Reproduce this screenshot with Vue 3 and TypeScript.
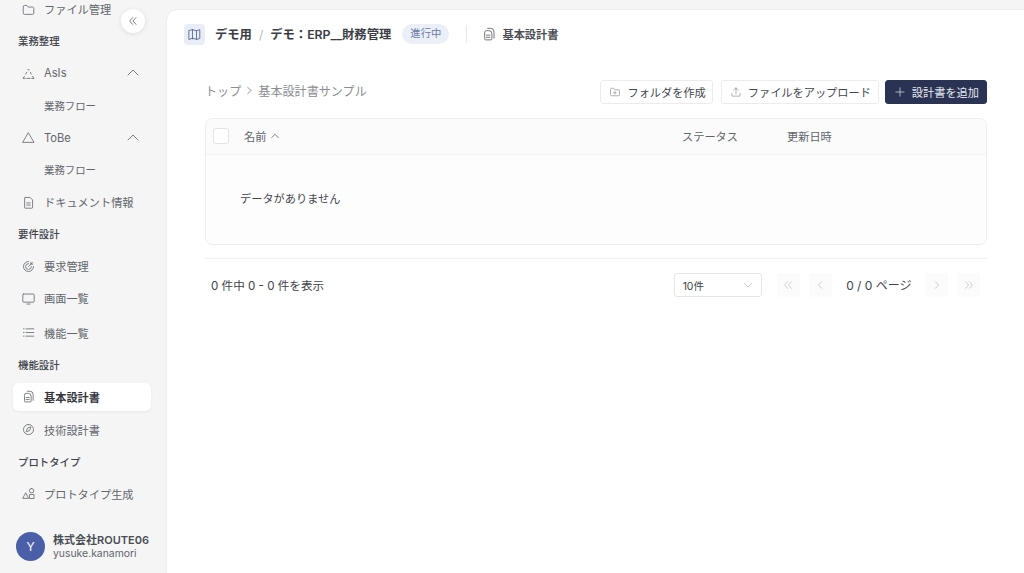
<script setup lang="ts">
type NavItem = {
  kind: 'head' | 'item' | 'sub'
  label: string
  icon?: string
  active?: boolean
  chevron?: boolean
  spaced?: boolean
}

const nav: NavItem[] = [
  { kind: 'item', label: 'ファイル管理', icon: 'folder' },
  { kind: 'head', label: '業務整理' },
  { kind: 'item', label: 'AsIs', icon: 'dashed', chevron: true },
  { kind: 'sub', label: '業務フロー' },
  { kind: 'item', label: 'ToBe', icon: 'triangle', chevron: true },
  { kind: 'sub', label: '業務フロー' },
  { kind: 'item', label: 'ドキュメント情報', icon: 'doc' },
  { kind: 'head', label: '要件設計' },
  { kind: 'item', label: '要求管理', icon: 'target' },
  { kind: 'item', label: '画面一覧', icon: 'monitor' },
  { kind: 'item', label: '機能一覧', icon: 'list', spaced: true },
  { kind: 'head', label: '機能設計' },
  { kind: 'item', label: '基本設計書', icon: 'files', active: true },
  { kind: 'item', label: '技術設計書', icon: 'compass' },
  { kind: 'head', label: 'プロトタイプ' },
  { kind: 'item', label: 'プロトタイプ生成', icon: 'shapes' },
]

const icons: Record<string, string> = {
  folder: 'M1.500 4.500A1.500 1.500 0 0 1 3 3h3l1.600 2H13a1.500 1.500 0 0 1 1.500 1.500v6A1.500 1.500 0 0 1 13 14H3a1.500 1.500 0 0 1-1.500-1.500z',
  dashed: 'M7.300 3.700 8 2.500l.7 1.200M10.200 6.500l1.300 2.300M13 11.500l1.800 2.500H12M10 14H6M4 14H1.200L3 11.500M5.800 6.500 4.500 8.800',
  triangle: 'M8 2.500 14.800 14H1.200z',
  doc: 'M4 1.800h6l3 3v9.400a.8.8 0 0 1-.8.8H4a.8.8 0 0 1-.8-.8V2.600A.8.8 0 0 1 4 1.800zM5.800 8.500h4.400M5.800 11.200h4.400',
  target: 'M8 1.800A6.200 6.200 0 1 0 14.200 8M8 4.400A3.600 3.600 0 1 0 11.600 8M8 8l4.800-4.800M10.900 2.800v2.300h2.300',
  monitor: 'M2 2.500h12a1 1 0 0 1 1 1v8a1 1 0 0 1-1 1H2a1 1 0 0 1-1-1v-8a1 1 0 0 1 1-1zM6 14.800h4',
  list: 'M5 3.500h9.500M5 8h9.500M5 12.500h9.500M1.800 3.500h.8M1.800 8h.8M1.800 12.500h.8',
  files: 'M6.500 1.500h3.200a4 4 0 0 1 4 4v7.200M3 6.200a2 2 0 0 1 2-2h2.800a3.500 3.500 0 0 1 3.500 3.500v5.800a1.200 1.200 0 0 1-1.200 1.200H4.200A1.200 1.200 0 0 1 3 13.300zM5 9.300h4M5 11.800h4',
  compass: 'M8 1.800a6.200 6.200 0 1 0 0 12.400A6.200 6.200 0 0 0 8 1.800zM10.800 5.200 9.400 9.400 5.200 10.800 6.600 6.600z',
  shapes: 'M4.800 7.500 8.200 14H1.400zM11.800 1.800a2.700 2.700 0 1 1 0 5.400 2.700 2.700 0 0 1 0-5.400zM9.800 9.200h5v5h-5z',
}
</script>

<template>
  <div class="page">
    <aside class="sidebar">
      <nav class="nav">
        <template v-for="(n, i) in nav" :key="i">
          <div v-if="n.kind === 'head'" class="nav-head">{{ n.label }}</div>
          <div v-else-if="n.kind === 'sub'" class="nav-sub">{{ n.label }}</div>
          <div v-else class="nav-item" :class="{ active: n.active, spaced: n.spaced }">
            <svg class="nav-icon" viewBox="0 0 16 16"><path :d="icons[n.icon!]" /></svg>
            <span>{{ n.label }}</span>
            <svg v-if="n.chevron" class="nav-chevron" viewBox="0 0 12 12"><path d="M1 8l5-5 5 5" /></svg>
          </div>
        </template>
      </nav>
      <div class="account">
        <div class="avatar">Y</div>
        <div class="account-text">
          <div class="company">株式会社ROUTE06</div>
          <div class="user">yusuke.kanamori</div>
        </div>
      </div>
      <button class="collapse">
        <svg viewBox="0 0 12 12"><path d="M5.500 2 2 6l3.500 4M9.500 2 6 6l3.500 4" /></svg>
      </button>
    </aside>

    <main class="panel">
      <header class="topbar">
        <span class="map-box">
          <svg viewBox="0 0 16 16"><path d="M1.500 3 5.500 2l5 1.500 4-1.500v11l-4 1-5-1.500-4 1.500zM5.500 2v11.500M10.500 3.500V14" /></svg>
        </span>
        <span class="crumb">デモ用</span>
        <span class="slash">/</span>
        <span class="crumb">デモ：ERP__財務管理</span>
        <span class="badge">進行中</span>
        <span class="divider"></span>
        <svg class="page-icon" viewBox="0 0 16 16"><path d="M6.500 1.500h3.200a4 4 0 0 1 4 4v7.200M3 6.200a2 2 0 0 1 2-2h2.800a3.500 3.500 0 0 1 3.500 3.500v5.800a1.200 1.200 0 0 1-1.200 1.200H4.200A1.200 1.200 0 0 1 3 13.300zM5 9.300h4M5 11.800h4" /></svg>
        <span class="page-name">基本設計書</span>
      </header>

      <section class="content">
        <div class="toolbar">
          <div class="path">
            <span>トップ</span>
            <svg viewBox="0 0 8 10"><path d="M2 1.500 6 5 2 8.500" /></svg>
            <span>基本設計書サンプル</span>
          </div>
          <div class="actions">
            <button class="btn folder-btn">
              <svg viewBox="0 0 16 16"><path d="M2 4.500A1.500 1.500 0 0 1 3.500 3h2.700l1.600 2h4.700A1.500 1.500 0 0 1 14 6.500v5a1.500 1.500 0 0 1-1.500 1.500h-9A1.500 1.500 0 0 1 2 11.500zM8 7.500v3M6.500 9h3" /></svg>
              フォルダを作成
            </button>
            <button class="btn">
              <svg viewBox="0 0 16 16"><path d="M2.500 10v2.500a1 1 0 0 0 1 1h9a1 1 0 0 0 1-1V10M8 10.500V2.500M5 5.500l3-3 3 3" /></svg>
              ファイルをアップロード
            </button>
            <button class="btn primary">
              <svg viewBox="0 0 16 16"><path d="M8 2.500v11M2.500 8h11" /></svg>
              設計書を追加
            </button>
          </div>
        </div>

        <div class="table">
          <div class="thead">
            <span class="check"></span>
            <span class="col-name">名前
              <svg viewBox="0 0 12 12"><path d="M2 8l4-4 4 4" /></svg>
            </span>
            <span class="col-status">ステータス</span>
            <span class="col-date">更新日時</span>
          </div>
          <div class="empty">データがありません</div>
        </div>

        <div class="pager">
          <span class="count">0 件中 0 - 0 件を表示</span>
          <div class="pager-right">
            <div class="select">
              <span>10件</span>
              <svg viewBox="0 0 12 12"><path d="M1.500 4l4.500 4.500L10.500 4" /></svg>
            </div>
            <div class="pages">
              <span class="page-btn"><svg viewBox="0 0 12 12"><path d="M5.500 2 2 6l3.500 4M10 2 6.500 6l3.500 4" /></svg></span>
              <span class="page-btn"><svg viewBox="0 0 12 12"><path d="M8 2 4 6l4 4" /></svg></span>
              <span class="page-label">0 / 0 ページ</span>
              <span class="page-btn"><svg viewBox="0 0 12 12"><path d="M4 2l4 4-4 4" /></svg></span>
              <span class="page-btn"><svg viewBox="0 0 12 12"><path d="M2 2l3.500 4L2 10M6.500 2 10 6l-3.500 4" /></svg></span>
            </div>
          </div>
        </div>
      </section>
    </main>
  </div>
</template>

<style>
html,
body {
  margin: 0;
  background: #f5f5f5;
}
</style>

<style scoped>
.page {
  display: flex;
  width: 1024px;
  height: 573px;
  overflow: hidden;
  background: #f5f5f5;
  color: #3c3f46;
  font-family: Inter, 'Noto Sans CJK JP', sans-serif;
  font-size: 11.2px;
}

svg {
  fill: none;
  stroke: currentColor;
  stroke-linecap: round;
  stroke-linejoin: round;
  flex-shrink: 0;
}

.sidebar {
  position: relative;
  display: flex;
  flex-direction: column;
  width: 167px;
  flex-shrink: 0;
  padding: 0 16px 12px 13px;
  box-sizing: border-box;
}

.nav {
  margin-top: -7px;
}

.nav-head {
  height: 32px;
  line-height: 34px;
  padding-left: 5px;
  font-size: 10.400px;
  font-weight: 500;
  color: #40434a;
}

.nav-item,
.nav-sub {
  display: flex;
  align-items: center;
  height: 32.200px;
  color: #62656c;
}

.nav-item {
  padding-left: 9px;
  gap: 9px;
}

.nav-item.spaced {
  margin-top: 2px;
}

.nav-sub {
  padding-left: 31px;
  font-size: 10.400px;
}

.nav-icon {
  width: 13px;
  height: 13px;
  stroke-width: 1.100;
  color: #70737a;
}

.nav-chevron {
  width: 12px;
  height: 12px;
  margin-left: auto;
  margin-right: 12px;
  stroke-width: 1;
  color: #7a7d84;
}

.nav-item.active {
  height: 28px;
  margin: 2px 0 3px;
  background: #fff;
  border-radius: 6px;
  box-shadow: 0 1px 3px rgba(0, 0, 0, 0.06);
  color: #33363d;
  font-weight: 600;
}

.account {
  display: flex;
  align-items: center;
  gap: 8px;
  margin-top: auto;
  margin-left: 3px;
}

.avatar {
  display: flex;
  align-items: center;
  justify-content: center;
  width: 29px;
  height: 29px;
  border-radius: 50%;
  background: #4a5fa8;
  color: #fff;
  font-size: 12px;
  font-weight: 400;
}

.account-text {
  line-height: 14px;
}

.company {
  font-weight: 600;
  color: #4a4d54;
  font-size: 11px;
  white-space: nowrap;
}

.user {
  font-size: 10.400px;
  color: #62656c;
}

.collapse {
  position: absolute;
  left: 121px;
  top: 9px;
  display: flex;
  align-items: center;
  justify-content: center;
  width: 24px;
  height: 24px;
  padding: 0;
  border: none;
  border-radius: 50%;
  background: #fff;
  box-shadow: 0 1px 5px rgba(0, 0, 0, 0.1);
  color: #666;
}

.collapse svg {
  width: 10px;
  height: 10px;
  stroke-width: 1;
}

.panel {
  flex: 1;
  margin-top: 10px;
  background: #fff;
  border-top-left-radius: 10px;
  box-shadow: 0 0 2px rgba(0, 0, 0, 0.1);
}

.topbar {
  display: flex;
  align-items: center;
  height: 48px;
  padding-left: 17px;
}

.map-box {
  display: flex;
  align-items: center;
  justify-content: center;
  width: 21px;
  height: 21px;
  margin-right: 10px;
  border-radius: 4px;
  background: #e9edf7;
  color: #4a5a88;
}

.map-box svg {
  width: 13px;
  height: 13px;
  stroke-width: 1;
}

.crumb {
  font-size: 12.300px;
  font-weight: 600;
  color: #3a3d44;
}

.slash {
  margin: 0 7px;
  color: #b5b7bc;
  font-size: 12px;
}

.badge {
  margin-left: 11px;
  padding: 0 8px;
  height: 20px;
  line-height: 20px;
  border-radius: 10px;
  background: #ebeff8;
  color: #6a7ba6;
  font-size: 10.400px;
}

.divider {
  width: 1px;
  height: 18px;
  margin: 0 15px 0 17px;
  background: #e8e8ea;
}

.page-icon {
  width: 14px;
  height: 14px;
  margin-right: 6px;
  stroke-width: 1;
  color: #62656c;
}

.page-name {
  font-weight: 600;
  color: #4a4d54;
}

.content {
  padding: 22px 37px 0 38px;
}

.toolbar {
  display: flex;
  align-items: center;
  justify-content: space-between;
  height: 24px;
}

.path {
  display: flex;
  align-items: center;
  gap: 5px;
  margin-top: -4px;
  font-size: 12.100px;
  color: #8b8e94;
}

.path svg {
  width: 7px;
  height: 9px;
  stroke-width: 1;
}

.actions {
  display: flex;
  gap: 6px;
}

.btn {
  display: flex;
  align-items: center;
  height: 24px;
  padding: 0 7px 1px 8px;
  gap: 6px;
  border: 1px solid #ececee;
  border-radius: 3px;
  background: #fff;
  color: #43464d;
  font: inherit;
  box-sizing: border-box;
}

.folder-btn {
  padding-right: 6px;
  margin-right: 2px;
}

.btn svg {
  width: 12px;
  height: 12px;
  stroke-width: 0.900;
  color: #85888e;
}

.primary {
  background: #2a3354;
  border-color: #2a3354;
  color: #e6e8ee;
}

.primary svg {
  color: #e6e8ee;
}

.table {
  margin-top: 14px;
  border: 1px solid #eeeeef;
  border-radius: 7px;
  background: #fdfdfd;
}

.thead {
  display: flex;
  align-items: center;
  height: 36px;
  padding-bottom: 2px;
  background: #fbfbfb;
  border-bottom: 1px solid #f3f3f4;
  border-radius: 7px 7px 0 0;
  color: #62656c;
  box-sizing: border-box;
}

.check {
  width: 14px;
  height: 14px;
  margin-left: 7px;
  border: 1px solid #e4e4e6;
  border-radius: 3px;
  background: #fff;
}

.col-name {
  display: flex;
  align-items: center;
  gap: 4px;
  margin-left: 15px;
  width: 438px;
}

.col-name svg {
  width: 10px;
  height: 10px;
  stroke-width: 1;
}

.col-status {
  width: 105px;
}

.empty {
  height: 89px;
  line-height: 88px;
  padding-left: 34px;
  color: #43464d;
}

.pager {
  display: flex;
  align-items: center;
  justify-content: space-between;
  margin-top: 13px;
  padding: 14px 7px 0 6px;
  height: 24px;
  border-top: 1px solid #f0f0f1;
}

.count {
  margin-top: -1px;
  font-size: 11.600px;
  color: #3f4249;
}

.pager-right {
  display: flex;
  align-items: center;
  gap: 15px;
}

.select {
  display: flex;
  align-items: center;
  justify-content: space-between;
  width: 88px;
  height: 24px;
  padding: 0 8px;
  border: 1px solid #e6e6e8;
  border-radius: 3px;
  box-sizing: border-box;
  font-size: 10.400px;
}

.select svg {
  width: 10px;
  height: 10px;
  stroke-width: 0.800;
  color: #a8aab0;
}

.pages {
  display: flex;
  align-items: center;
  gap: 9px;
}

.page-btn {
  display: flex;
  align-items: center;
  justify-content: center;
  width: 23px;
  height: 24px;
  border-radius: 3px;
  background: #fbfbfc;
  color: #c2c4c9;
}

.page-btn svg {
  width: 10px;
  height: 10px;
  stroke-width: 1;
}

.page-label {
  margin: -2px 4.500px 0 5.500px;
  font-size: 12px;
  white-space: nowrap;
  color: #3f4249;
}
</style>
